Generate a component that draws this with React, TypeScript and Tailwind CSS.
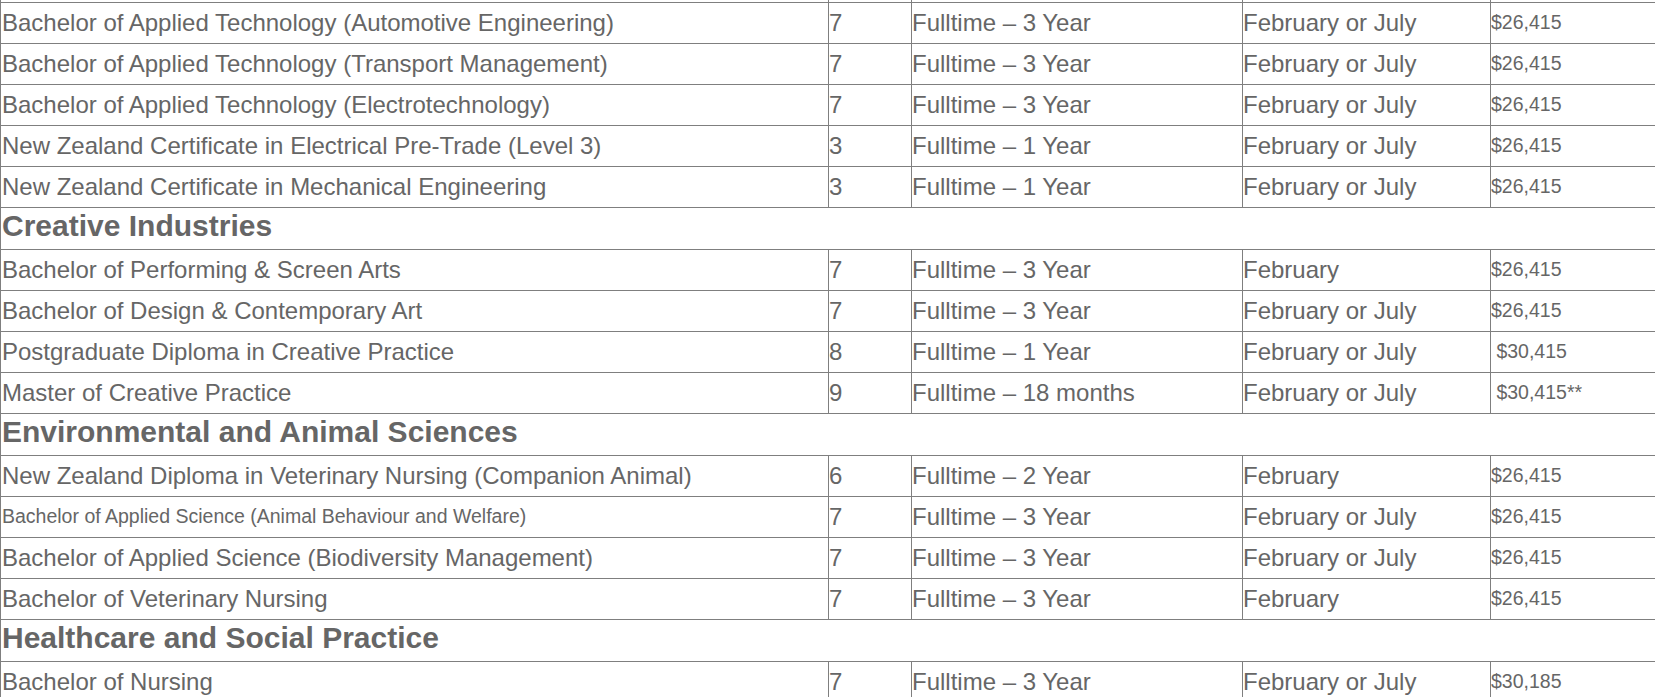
type Row =
  | { kind: "heading"; title: string }
  | { kind: "course"; name: string; level: string; duration: string; intake: string; fee: string; small?: boolean };

const rows: Row[] = [
  { kind: "course", name: "Bachelor of Applied Technology (Automotive Engineering)", level: "7", duration: "Fulltime – 3 Year", intake: "February or July", fee: "$26,415" },
  { kind: "course", name: "Bachelor of Applied Technology (Transport Management)", level: "7", duration: "Fulltime – 3 Year", intake: "February or July", fee: "$26,415" },
  { kind: "course", name: "Bachelor of Applied Technology (Electrotechnology)", level: "7", duration: "Fulltime – 3 Year", intake: "February or July", fee: "$26,415" },
  { kind: "course", name: "New Zealand Certificate in Electrical Pre-Trade (Level 3)", level: "3", duration: "Fulltime – 1 Year", intake: "February or July", fee: "$26,415" },
  { kind: "course", name: "New Zealand Certificate in Mechanical Engineering", level: "3", duration: "Fulltime – 1 Year", intake: "February or July", fee: "$26,415" },
  { kind: "heading", title: "Creative Industries" },
  { kind: "course", name: "Bachelor of Performing & Screen Arts", level: "7", duration: "Fulltime – 3 Year", intake: "February", fee: "$26,415" },
  { kind: "course", name: "Bachelor of Design & Contemporary Art", level: "7", duration: "Fulltime – 3 Year", intake: "February or July", fee: "$26,415" },
  { kind: "course", name: "Postgraduate Diploma in Creative Practice", level: "8", duration: "Fulltime – 1 Year", intake: "February or July", fee: "\u00a0$30,415" },
  { kind: "course", name: "Master of Creative Practice", level: "9", duration: "Fulltime – 18 months", intake: "February or July", fee: "\u00a0$30,415**" },
  { kind: "heading", title: "Environmental and Animal Sciences" },
  { kind: "course", name: "New Zealand Diploma in Veterinary Nursing (Companion Animal)", level: "6", duration: "Fulltime – 2 Year", intake: "February", fee: "$26,415" },
  { kind: "course", name: "Bachelor of Applied Science (Animal Behaviour and Welfare)", level: "7", duration: "Fulltime – 3 Year", intake: "February or July", fee: "$26,415", small: true },
  { kind: "course", name: "Bachelor of Applied Science (Biodiversity Management)", level: "7", duration: "Fulltime – 3 Year", intake: "February or July", fee: "$26,415" },
  { kind: "course", name: "Bachelor of Veterinary Nursing", level: "7", duration: "Fulltime – 3 Year", intake: "February", fee: "$26,415" },
  { kind: "heading", title: "Healthcare and Social Practice" },
  { kind: "course", name: "Bachelor of Nursing", level: "7", duration: "Fulltime – 3 Year", intake: "February or July", fee: "$30,185" },
];

const grid = "grid grid-cols-[828px_83px_331px_248px_1fr] border-b border-[#7f7f7f]";
const cell = "border-l border-[#7f7f7f] whitespace-nowrap overflow-hidden";

export default function App() {
  return (
    <div
      className="h-[697px] w-full overflow-hidden bg-white text-[#666666]"
      style={{ fontFamily: '"Liberation Sans", Arial, sans-serif' }}
    >
      <div className="w-[1720px]">
        {/* tail of the row above */}
        <div className={`${grid} h-[3px]`}>
          <div className={cell} />
          <div className={cell} />
          <div className={cell} />
          <div className={cell} />
          <div className={cell} />
        </div>

        {rows.map((row, i) =>
          row.kind === "heading" ? (
            <div key={i} className="h-[42px] border-b border-l border-[#7f7f7f] pl-[1px]">
              <h3 className="text-[30px] font-bold leading-[36px]">{row.title}</h3>
            </div>
          ) : (
            <div key={i} className={`${grid} h-[41px] text-[24px] leading-[39px]`}>
              <div className={`${cell} pl-[1px] ${row.small ? "text-[19.5px]" : ""}`}>{row.name}</div>
              <div className={cell}>{row.level}</div>
              <div className={cell}>{row.duration}</div>
              <div className={cell}>{row.intake}</div>
              <div className={`${cell} text-[19.5px]`}>{row.fee}</div>
            </div>
          )
        )}
      </div>
    </div>
  );
}
